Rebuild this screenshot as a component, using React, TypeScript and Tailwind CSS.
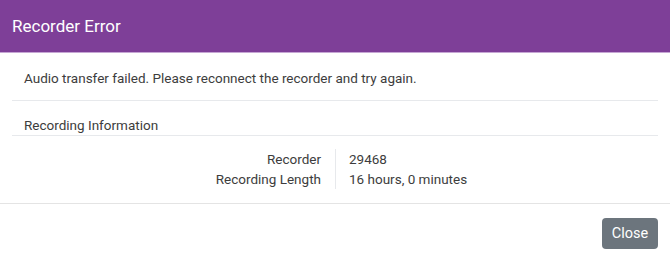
import React from 'react';

const rows = [
  { label: 'Recorder', value: '29468' },
  { label: 'Recording Length', value: '16 hours, 0 minutes' },
];

export default function App() {
  return (
    <div
      className="w-[670px] h-[263px] bg-white flex flex-col text-[#3d3d3d]"
      style={{ fontFamily: 'Roboto, "Noto Sans", sans-serif' }}
    >
      <div className="h-[53px] shrink-0 bg-[#7e3f98] border-b border-[#c6a6d4] px-3 flex items-center">
        <h1 className="text-[17px] leading-6 text-white">Recorder Error</h1>
      </div>

      <div className="px-3">
        <div className="pt-[15px] pb-3 px-3 border-b border-[#e7e9ec] text-[13.5px] leading-5">
          Audio transfer failed. Please reconnect the recorder and try again.
        </div>
        <div className="pt-[14px] px-3 border-b border-[#e7e9ec] text-[13.5px] leading-5">
          Recording Information
        </div>
        <div className="grid grid-cols-2 pt-[13px] pb-[14px] text-[13.5px] leading-5">
          <div className="text-right pr-[14px]">
            {rows.map((r) => (
              <div key={r.label}>{r.label}</div>
            ))}
          </div>
          <div className="border-l border-[#e7e9ec] pl-[13px]">
            {rows.map((r) => (
              <div key={r.label}>{r.value}</div>
            ))}
          </div>
        </div>
      </div>

      <div className="border-t border-[#e4e4e4] px-3 pt-[14px] flex justify-end">
        <button className="h-[31px] w-[56px] rounded-[4px] bg-[#6c757d] text-white text-[14.5px]">
          Close
        </button>
      </div>
    </div>
  );
}
